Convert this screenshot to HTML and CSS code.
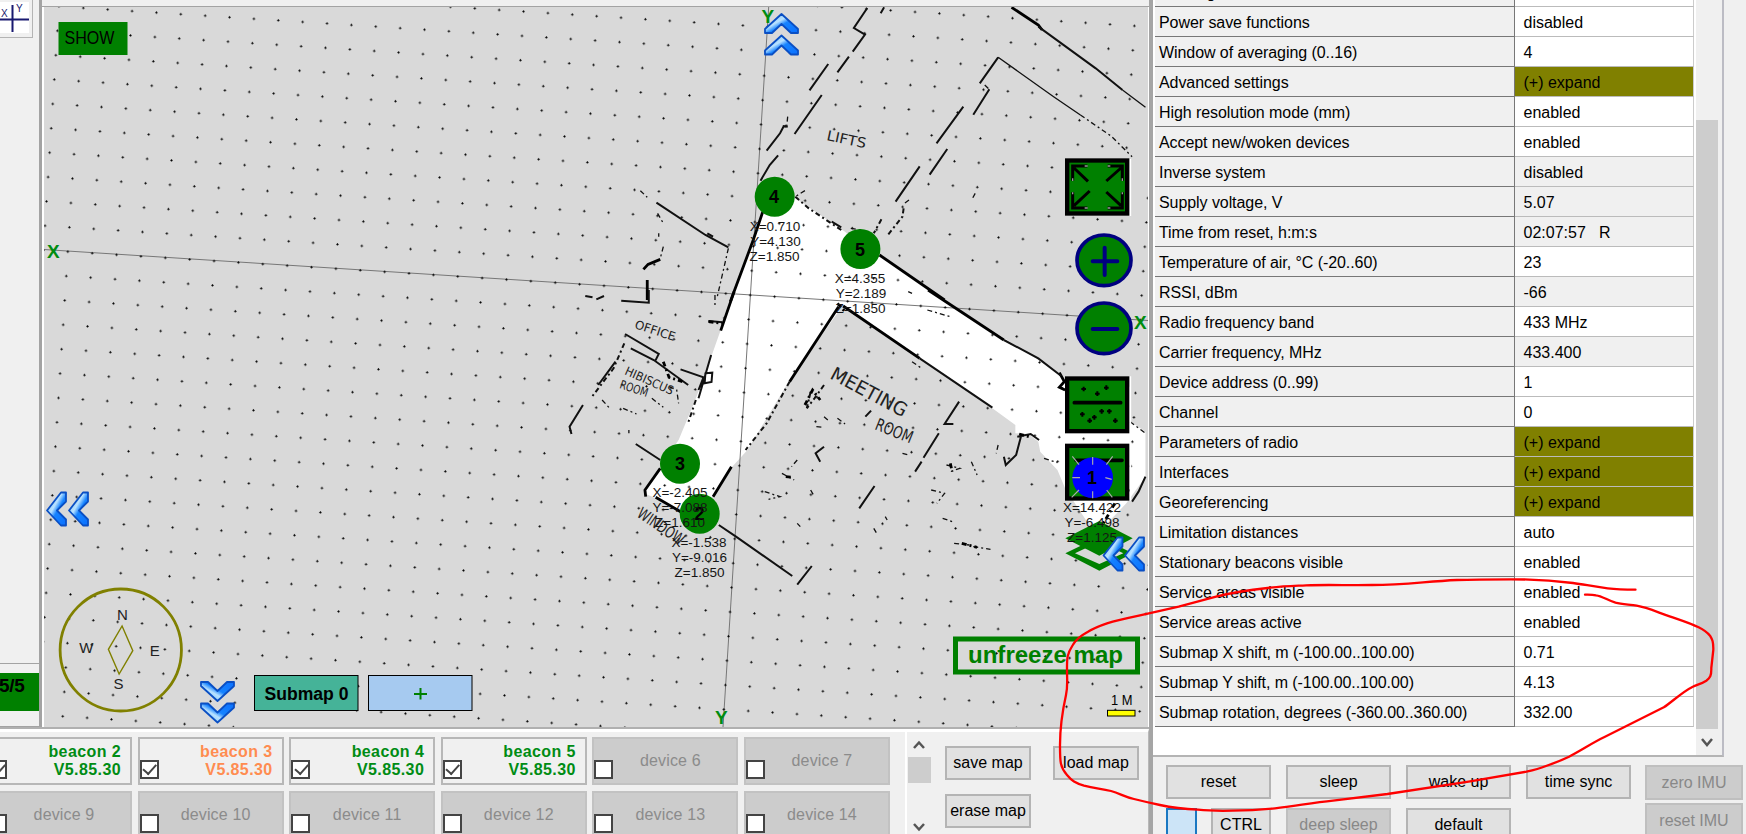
FILE: index.html
```html
<!DOCTYPE html>
<html lang="en">
<head>
<meta charset="utf-8">
<title>Dashboard</title>
<link rel="stylesheet" href="styles.css">
</head>
<body>
<div class="app">
  <div class="workspace">
    <div class="upper">
      <aside class="rail">
        <div class="tool">
          <svg class="tool-icon" viewBox="0 0 29 31"><rect width="29" height="31" fill="#fff"/><path d="M12.5 3V30M0 17.5H29" stroke="#191970" stroke-width="2"/><text x="1" y="15" font-size="10" fill="#191970">X</text><text x="16" y="10" font-size="10" fill="#191970">Y</text></svg>
        </div>
        <div class="counter"><div class="counter-value">5/5</div></div>
      </aside>
      <div class="map">
        <svg class="map-canvas" viewBox="44 7 1104 720" width="1104" height="720">
          <defs>
            <pattern id="grid" width="24.42" height="24.42" patternUnits="userSpaceOnUse" patternTransform="translate(750.2 295.2) rotate(3.64) translate(-12.21 -12.21)">
              <path d="M11.1 12.21h2.2M12.21 11.1v2.2" stroke="#000" stroke-width="1.15"/>
            </pattern>
            <linearGradient id="blue" x1="0" y1="0" x2="1" y2="1"><stop offset="0" stop-color="#5eb4f4"/><stop offset=".4" stop-color="#b9e2ff"/><stop offset=".55" stop-color="#1683ff"/><stop offset="1" stop-color="#0a70ff"/></linearGradient>
            <path id="chevL" d="M15 1H20V10L11 19L20 28V34H15L1 19Z" fill="url(#blue)" stroke="#0a4fc4" stroke-width="1.8" stroke-linejoin="round"/>
            <path id="chevU" d="M17.5 1L34 16V20H27L17.5 11L8 20H1V16Z" fill="url(#blue)" stroke="#0a4fc4" stroke-width="1.8" stroke-linejoin="round"/>
          </defs>
          <rect x="44" y="7" width="1104" height="720" fill="#d9d9d9"/>
          <!-- service area -->
          <g transform="translate(560 290) scale(.38265 .33333)">
            <path fill="#fff" d="M530 -230L615 -275L745 -175L785 -130L835 -105L1005 30L1305 250L1330 290H1490L1492 395L1530 425V560L1480 640L1430 700H1380L1320 595L1300 540L1255 485L1250 455L1225 432L1190 430V405L1130 355L740 45L600 270L490 480L450 530L400 620L300 660L250 625L220 610L222 600L262 530L310 450L350 340L380 250L420 120L455 10Z"/>
          </g>
          <g class="axis">
            <path d="M44 249.500L1148 320.500M768.700 7L723 727"/>
          </g>
          <rect x="44" y="7" width="1104" height="720" fill="url(#grid)"/>
          <!-- upper walls -->
          <g class="wall" transform="scale(.38265 .33333) translate(1463.5 0)">
            <path d="M803 24L768 84L797 104L765 155M847 22L838 40M755 170L725 217M701 192L652 271M684 285L613 402M585 378L575 400L540 452M595 380L582 378M570 466L548 495L524 542M1122 268L1080 344M1145 172L1097 250M1054 320L984 430M1012 447L966 524M940 499L877 605"/>
            <path class="w2" d="M530 635L505 720L445 905M835 765L1005 900M1180 22L1250 75L1260 90"/>
            <path d="M1250 80L1400 205L1470 270"/>
            <path class="thin" d="M1470 270L1530 322M1145 172L1290 290L1360 345"/>
            <path class="dash" d="M898 625L895 650L858 703M840 658L820 700M615 590L650 625L735 690"/>
            <path class="thin dash" d="M1360 345L1440 408L1495 470M440 745L425 820L410 895M210 572L228 592M1085 580L1078 595M760 685L785 690M640 572L615 590M255 640L270 670M258 700V710M270 740L262 775M595 350L592 385M1110 255L1122 268M912 600L900 610"/>
            <path d="M252 608L380 705L440 742M385 700L400 710M710 665L735 682"/>
            <path class="w2" d="M262 778L230 793L218 808M228 840V900"/>
          </g>
          <!-- lower walls -->
          <g class="wall" transform="translate(560 290) scale(.38265 .33333)">
            <path class="w2" d="M455 5L420 122M728 50L600 275M1305 248L1318 275L1305 292L1320 300M262 535L222 600L224 620M448 530L400 620M962 0L1160 150M740 48L940 205M250 622L315 665"/>
            <path d="M940 205L1130 353M1160 150L1250 205L1310 258M395 195L362 325M388 93L425 97M198 462L262 510M415 705L460 740L607 858M658 828L620 884M232 0V38L160 32M66 18L85 22M95 28L115 18M315 238L375 262L362 300M380 250L398 248L396 276L378 280ZM185 175L245 210L335 285M170 132L258 192L248 215M1043 335L1005 402H1028M990 430L950 503M945 515L928 545M822 588L782 655M1195 440L1230 432L1252 450M1205 438L1192 495L1165 525L1160 500M1530 560L1512 605L1495 635M60 345L25 410L30 432M145 215L100 285M690 470L668 490L680 515M813 362L798 380"/>
            <path class="dash" d="M600 275L540 400L485 480M355 330L335 398M168 160L140 235L85 318M655 305L645 355M690 285L665 325L645 355"/>
            <path class="thin dash" d="M110 330L130 355M165 355L200 372M240 325L270 352M285 290L305 300L310 340M670 410L690 412M690 380L705 395M725 385L745 402M620 510L605 530M580 550L612 570M535 605L575 620L545 628M655 600L665 620M970 600L1005 610L985 640M1010 525L1045 535L1020 545M1075 515L1090 555M1145 465L1140 490M1030 760L1070 765M1080 770L1125 778M850 680L855 690M820 715L830 735M920 215L945 235M960 60L1020 80M920 10L910 5M1490 395L1530 430M1265 505L1300 518M895 490L910 495M1000 685L1025 695M620 700L628 710M405 15V50M180 420V430"/>
            <path class="w2 dash" d="M725 40L745 65M640 345L660 300L680 330M1050 760L1090 772M1020 520L1025 545M590 560L610 562M1200 432L1225 440M1450 640L1410 720M270 215L285 262L320 275M388 95L425 100"/>
          </g>
          <g class="scrawl">
            <text transform="translate(826 140) rotate(12)" font-size="14" textLength="40" lengthAdjust="spacingAndGlyphs">LIFTS</text>
            <text transform="translate(634 328) rotate(18)" font-size="12" textLength="42" lengthAdjust="spacingAndGlyphs">OFFICE</text>
            <text transform="translate(624 374) rotate(24)" font-size="12" textLength="52" lengthAdjust="spacingAndGlyphs">HIBISCUS</text>
            <text transform="translate(619 388) rotate(18)" font-size="12" textLength="29" lengthAdjust="spacingAndGlyphs">ROOM</text>
            <text transform="translate(829 378) rotate(28)" font-size="19" textLength="84" lengthAdjust="spacingAndGlyphs">MEETING</text>
            <text transform="translate(874 429) rotate(22)" font-size="17" textLength="39" lengthAdjust="spacingAndGlyphs">ROOM</text>
            <text transform="translate(636 516) rotate(34)" font-size="16" textLength="53" lengthAdjust="spacingAndGlyphs">WINDOW</text>
          </g>
          <g class="axis-name">
            <text x="47" y="258">X</text><text x="1134" y="328.500">X</text><text x="761.500" y="23">Y</text><text x="715" y="724">Y</text>
          </g>
          <rect x="58.500" y="22" width="69" height="33" fill="#008000"/>
          <text x="64.500" y="44" font-size="18.500" textLength="50" lengthAdjust="spacingAndGlyphs">SHOW</text>
          <!-- compass -->
          <g transform="translate(0 440) scale(.36991 .33333)" fill="none" stroke="#808000">
            <ellipse class="fixed" cx="326.500" cy="630" rx="164" ry="183" stroke-width="2.800"/>
            <path class="fixed" d="M330 558L359 632L322 702L293 628Z" stroke-width="1.400"/>
          </g>
          <g class="compass-text">
            <text x="122.300" y="619.500">N</text><text x="86.300" y="652.500">W</text><text x="154.700" y="655.500">E</text><text x="118.600" y="688.500">S</text>
          </g>
          <!-- map tools -->
          <g transform="translate(1040 140) scale(.33333)">
            <path d="M271 57V228M271 709V880M271 911V1082" stroke="#fff" stroke-width="5"/>
            <g fill="#008000" stroke="#000" stroke-width="13">
              <rect x="81.500" y="61.500" width="180" height="159"/>
              <rect x="81.500" y="715.500" width="180" height="158"/>
              <rect x="81.500" y="917.500" width="180" height="158"/>
            </g>
            <path d="M142 78H98V122M203 78H247V122M98 157V204H142M247 157V204H203M102 84L144 124M243 84L199 123M102 197L149 153M243 197L199 156" fill="none" stroke="#000" stroke-width="9"/>
            <path d="M134 78H143M98 115V123M203 78H211M247 115V123M98 157V163M134 204H143M247 157V163M203 204H211" stroke="#9a9a9a" stroke-width="4"/>
            <ellipse cx="192" cy="361" rx="81" ry="76" fill="#008000" stroke="#000080" stroke-width="11"/>
            <path d="M158 364H232M194 323V405" stroke="#000080" stroke-width="12" stroke-linecap="round"/>
            <ellipse cx="192" cy="565" rx="81" ry="76" fill="#008000" stroke="#000080" stroke-width="11"/>
            <path d="M158 567H232" stroke="#000080" stroke-width="12" stroke-linecap="round"/>
            <path d="M103 788H242M108 961H246" stroke="#000" stroke-width="11" stroke-linecap="round"/>
            <path d="M124 747h14M131 740v14M192 743h14M199 736v14M165 761h14M172 754v14M120 823h14M127 816v14M142 842h14M149 835v14M156 832h14M163 825v14M178 814h14M185 807v14M201 814h14M208 807v14M219 842h14M226 835v14" stroke="#000" stroke-width="6"/>
            <path d="M78 1240L178 1190L276 1240L178 1288Z" fill="#d9d9d9"/>
            <path fill="#008000" fill-rule="evenodd" d="M76 1240L178 1190L278 1240L178 1292ZM105 1240L178 1272L250 1240L178 1205Z"/>
            <path fill="#008000" d="M76 1195L178 1143L278 1195L178 1247Z"/>
            <circle cx="158" cy="1013" r="61" fill="#0000ff"/>
            <path d="M97 949L117 974M158 951V974M218 949L199 974M97 1013H120M196 1013L215 1018M95 1072L117 1050M158 1054V1075M200 1050L217 1072" stroke="#aaa" stroke-width="3.500"/>
          </g>
          <!-- beacons -->
          <g fill="#008000"><circle cx="774.700" cy="196.700" r="20"/><circle cx="860.400" cy="249" r="20"/><circle cx="680" cy="463.700" r="20"/><circle cx="699.700" cy="513.700" r="20"/></g>
          <g class="beacon-id"><text x="774" y="203">4</text><text x="860" y="255.500">5</text><text x="680" y="470">3</text><text x="699.500" y="519.500">2</text><text x="1092" y="484">1</text></g>
          <g class="coords">
            <text x="775" y="230.500">X=0.710</text><text x="775.500" y="245.500">Y=4.130</text><text x="774.500" y="260.500">Z=1.850</text>
            <text x="860" y="283">X=4.355</text><text x="861" y="298">Y=2.189</text><text x="860.500" y="313">Z=1.850</text>
            <text x="680" y="497">X=-2.405</text><text x="680" y="512">Y=-7.088</text><text x="680" y="527">Z=1.610</text>
            <text x="699" y="547">X=-1.538</text><text x="699.500" y="562">Y=-9.016</text><text x="699.500" y="577">Z=1.850</text>
            <text x="1092" y="511.500">X=14.422</text><text x="1092" y="526.500">Y=-6.498</text><text x="1092" y="541.500">Z=1.125</text>
          </g>
          <!-- pan arrows -->
          <use href="#chevL" x="46" y="491.500"/><use href="#chevL" x="68" y="491.500"/>
          <use href="#chevU" x="764" y="13"/><use href="#chevU" x="764" y="34.500"/>
          <use href="#chevU" transform="translate(200 702) scale(1 -1)"/><use href="#chevU" transform="translate(200 723.500) scale(1 -1)"/>
          <use href="#chevL" x="1102.500" y="536.500"/><use href="#chevL" x="1124" y="536.500"/>
          <!-- submaps -->
          <g stroke="#000"><rect x="254.500" y="675.500" width="103.500" height="35" fill="#45b398"/><rect x="368.500" y="675.500" width="103.500" height="35" fill="#a6caf0"/></g>
          <text class="bold" x="264.500" y="700" font-size="18" textLength="84" lengthAdjust="spacingAndGlyphs">Submap 0</text>
          <path d="M414 694H427M420.500 688V699.500" stroke="#008000" stroke-width="2"/>
          <rect x="955.500" y="639" width="182" height="33" fill="none" stroke="#008000" stroke-width="5"/>
          <text class="bold" x="968" y="662.500" font-size="23" fill="#008000" textLength="155" lengthAdjust="spacingAndGlyphs">unfreeze map</text>
          <text x="1111" y="704.500" font-size="14" textLength="21.500" lengthAdjust="spacingAndGlyphs">1 M</text>
          <rect x="1107.500" y="710.300" width="27.500" height="5.700" fill="#ff0" stroke="#000"/>
        </svg>
      </div>
    </div>
    <div class="lower">
      <div class="devices">
        <div class="card on"><i class="box checked"></i><b>beacon 2<br>V5.85.30</b></div>
        <div class="card on warn"><i class="box checked"></i><b>beacon 3<br>V5.85.30</b></div>
        <div class="card on"><i class="box checked"></i><b>beacon 4<br>V5.85.30</b></div>
        <div class="card on"><i class="box checked"></i><b>beacon 5<br>V5.85.30</b></div>
        <div class="card"><i class="box"></i><span>device 6</span></div>
        <div class="card"><i class="box"></i><span>device 7</span></div>
        <div class="card"><i class="box"></i><span>device 9</span></div>
        <div class="card"><i class="box"></i><span>device 10</span></div>
        <div class="card"><i class="box"></i><span>device 11</span></div>
        <div class="card"><i class="box"></i><span>device 12</span></div>
        <div class="card"><i class="box"></i><span>device 13</span></div>
        <div class="card"><i class="box"></i><span>device 14</span></div>
      </div>
      <div class="mini-scroll">
        <svg width="22" height="29"><path d="M6 20L11 14.500L16 20" class="arrow"/></svg>
        <div class="thumb"></div>
        <svg width="22" height="54"><path d="M6 45L11 50.500L16 45" class="arrow"/></svg>
      </div>
      <div class="map-actions">
        <button class="btn">save map</button><button class="btn">load map</button><button class="btn">erase map</button>
      </div>
    </div>
  </div>
  <div class="splitter"></div>
  <div class="inspector">
    <div class="list">
      <div class="props">
        <div class="row"><span>Filtering</span><em></em></div>
        <div class="row"><span>Power save functions</span><em>disabled</em></div>
        <div class="row"><span>Window of averaging (0..16)</span><em>4</em></div>
        <div class="row"><span>Advanced settings</span><em class="more">(+) expand</em></div>
        <div class="row"><span>High resolution mode (mm)</span><em>enabled</em></div>
        <div class="row"><span>Accept new/woken devices</span><em>enabled</em></div>
        <div class="row"><span>Inverse system</span><em class="ro">disabled</em></div>
        <div class="row"><span>Supply voltage, V</span><em class="ro">5.07</em></div>
        <div class="row"><span>Time from reset, h:m:s</span><em class="ro">02:07:57&nbsp;&nbsp; R</em></div>
        <div class="row"><span>Temperature of air, °C (-20..60)</span><em>23</em></div>
        <div class="row"><span>RSSI, dBm</span><em class="ro">-66</em></div>
        <div class="row"><span>Radio frequency band</span><em>433 MHz</em></div>
        <div class="row"><span>Carrier frequency, MHz</span><em class="ro">433.400</em></div>
        <div class="row"><span>Device address (0..99)</span><em>1</em></div>
        <div class="row"><span>Channel</span><em>0</em></div>
        <div class="row"><span>Parameters of radio</span><em class="more">(+) expand</em></div>
        <div class="row"><span>Interfaces</span><em class="more">(+) expand</em></div>
        <div class="row"><span>Georeferencing</span><em class="more">(+) expand</em></div>
        <div class="row"><span>Limitation distances</span><em>auto</em></div>
        <div class="row"><span>Stationary beacons visible</span><em>enabled</em></div>
        <div class="row"><span>Service areas visible</span><em>enabled</em></div>
        <div class="row"><span>Service areas active</span><em>enabled</em></div>
        <div class="row"><span>Submap X shift, m (-100.00..100.00)</span><em>0.71</em></div>
        <div class="row"><span>Submap Y shift, m (-100.00..100.00)</span><em>4.13</em></div>
        <div class="row"><span>Submap rotation, degrees (-360.00..360.00)</span><em>332.00</em></div>
      </div>
      <div class="scroll"><div class="scroll-thumb"></div><svg width="22" height="27"><path d="M6 14L11 20L16 14" class="arrow"/></svg></div>
    </div>
    <div class="commands">
      <div class="main-cmds">
        <button class="btn">reset</button><button class="btn">sleep</button><button class="btn">wake up</button><button class="btn">time sync</button>
        <div class="split"><button class="btn focus"></button><button class="btn ctrl">CTRL</button></div><button class="btn off">deep sleep</button><button class="btn">default</button>
      </div>
      <div class="imu"><button class="btn off">zero IMU</button><button class="btn off">reset IMU</button></div>
    </div>
  </div>
</div>
<svg class="markup" viewBox="0 0 1746 834"><path d="M1635.500 589.700C1625 589.700 1617 589.500 1607.700 588.300C1592 586.500 1585 584.500 1573 583C1545 579.500 1530 579.300 1511 579.300C1485 579.300 1475 579.300 1457 580C1425 581.500 1405 585 1372 585C1350 585.500 1330 584.500 1306 585.300C1290 586 1283 586 1267.600 588C1250 590 1235 592 1217 596.300L1178.700 606.700L1140 615.300C1125 618.500 1116 620.500 1107 623.300C1099 626 1094 628 1088 631.700C1080 636 1076 639 1072.800 645C1067 654 1067 658 1067 668C1067 682 1068 686 1066 695C1062 713 1060 730 1060 745C1060 762 1060 767 1067 775C1072 781 1075 783 1084 785.700C1095 788.500 1100 788.500 1111 791C1120 793.500 1125 797 1134 799C1142 801 1148 802.500 1160 805C1172 807.500 1185 809 1198 809.700C1210 811 1220 811 1232.800 810.700C1248 810.500 1258 810 1275 808.300C1295 806 1312 803 1333 800.700L1387.400 794L1468.600 781.700L1526.500 771.700C1537 769.500 1540 768.500 1546 766C1556 762.500 1562 760 1569 756.700C1582 750 1592 743 1604 737.300L1663.800 707.300C1672 702 1682 692 1692.800 686.700C1698 684.500 1702 683.500 1706.300 680.700C1710 678 1711.500 676 1711.300 668L1713.300 650C1713.500 641 1712 639 1710 635.700C1706 631 1704 630 1698.600 627.300C1690 623 1680 620 1669.600 616.300C1657 612 1647 607.500 1636.700 605.700C1630 604.500 1622 604.500 1615.500 602.700C1607 600 1602 596 1596 595.300C1592 594.500 1588 594.700 1585 594.700"/></svg>
</body>
</html>
```
FILE: styles.css
```css
* { box-sizing: border-box; }
body {
  margin: 0;
  width: 1746px;
  height: 834px;
  overflow: hidden;
  position: relative;
  background: #f0f0f0;
  color: #000;
  font: 16px "Liberation Sans", Arial, sans-serif;
}
.app { display: flex; height: 834px; }
.workspace { width: 1149px; display: flex; flex-direction: column; }
.upper { display: flex; height: 729px; border-bottom: 2px solid #b0b0b0; }

.rail { width: 42px; border-right: 3px solid #a3a3a3; display: flex; flex-direction: column; justify-content: space-between; }
.tool { width: 33px; height: 38px; padding-top: 2px; border-right: 1px solid #b4b4b4; border-bottom: 1px solid #b4b4b4; }
.tool-icon { display: block; width: 29px; height: 31px; }
.counter { height: 64px; border-top: 1px solid #a3a3a3; border-bottom: 1px solid #a3a3a3; padding-top: 9px; }
.counter-value { height: 38px; background: #008000; font-weight: bold; font-size: 19px; line-height: 25px; letter-spacing: -.3px; padding-top: 0; text-indent: -1px; }

.map { flex: 1; padding-left: 2px; margin-top: 6px; border-top: 1px solid #a3a3a3; overflow: hidden; background: #fff; }
.map-canvas { display: block; }
.map-canvas .bold { font-weight: bold; }
.axis path { stroke: #777; stroke-width: 1; fill: none; }
.axis-name { font-weight: bold; font-size: 19px; fill: #008c10; }
.wall path { fill: none; stroke: #111; stroke-width: 2; vector-effect: non-scaling-stroke; }
.wall .w2 { stroke-width: 2.8; stroke: #000; }
.wall .thin { stroke-width: 1.3; }
.wall .dash { stroke-dasharray: 5 3 2 3; }
.fixed { vector-effect: non-scaling-stroke; }
.scrawl { font-family: "DejaVu Sans", sans-serif; fill: #222; }
.compass-text { font-size: 15px; text-anchor: middle; fill: #222; }
.beacon-id { font-size: 18px; font-weight: bold; text-anchor: middle; }
.coords { font-size: 13.5px; text-anchor: middle; fill: #151515; }

.lower { flex: 1; display: flex; overflow: hidden; border-right: 1px solid #b8b8b8; border-top: 3px solid #fff; }
.devices { margin-left: -14px; padding-top: 5px; display: grid; grid-template-columns: repeat(6, 146px); grid-auto-rows: 48px; column-gap: 5.6px; row-gap: 6px; border-right: 2px solid #fff; width: 921px; flex: none; }
.card { display: flex; align-items: flex-end; border: 2px solid #c2c2c2; background: #cccccc; color: #8b8b8b; }
.card span { flex: 1; text-align: center; padding-right: 9px; line-height: 18px; margin-bottom: 13px; font-size: 16px; letter-spacing: .15px; }
.card.on { background: #f0f0f0; border-color: #b7b7b7; color: #008c14; }
.card b { flex: 1; text-align: right; padding-right: 9px; line-height: 18px; margin-bottom: 4px; letter-spacing: .4px; }
.card.warn { color: #ff8c50; }
.box { width: 19px; height: 19px; flex: none; border: 2px solid #444; background: #fff; margin-bottom: 4px; }
.checked { display: flex; justify-content: center; }
.checked::after { content: ""; width: 6px; height: 11px; border: solid #444; border-width: 0 2px 2px 0; transform: rotate(42deg) translate(0, -1px); }
.mini-scroll { width: 24px; padding-left: 1px; display: flex; flex-direction: column; }
.mini-scroll svg, .scroll svg { display: block; flex: none; margin-top: -4px; }
.thumb { height: 26px; background: #cdcdcd; flex: none; }
.arrow { fill: none; stroke: #555; stroke-width: 2.5; }
.map-actions { padding: 14px 0 0 14px; display: grid; grid-template-columns: 86px 86px; grid-auto-rows: 34px; column-gap: 22px; row-gap: 14px; }
.btn { border: 2px solid #b4b4b4; border-radius: 0; background: #e1e1e1; padding: 0; font: 16px "Liberation Sans", Arial, sans-serif; color: #000; white-space: nowrap; }
.btn.off { background: #cccccc; color: #888; border-color: #bfbfbf; }

.splitter { width: 4px; background: #a5a5a5; }
.inspector { flex: 1; display: flex; flex-direction: column; }
.list { width: 571px; height: 757px; display: flex; background: #fff; border-right: 2px solid #bcbcc4; border-bottom: 2px solid #b4b4b4; padding-left: 2px; overflow: hidden; }
.props { width: 540px; margin-top: -23.5px; }
.row { display: flex; height: 30.04px; line-height: 31px; white-space: nowrap; }
.row span { width: 359.5px; background: #f0f0f0; border-right: 1px solid #777; border-bottom: 1.5px solid #777; padding-left: 4px; letter-spacing: -.07px; }
.row em { flex: 1; font-style: normal; padding-left: 9px; border-bottom: 1px solid #bbb; border-right: 1px solid #ccc; }
.row .ro { background: #f0f0f0; }
.row .more { background: #808000; }
.scroll { margin-left: 2px; width: 26px; background: #f0f0f0; padding-top: 120px; }
.scroll-thumb { width: 22px; height: 609px; background: #cdcdcd; }
.commands { flex: 1; display: flex; padding: 8px 0 0 13px; gap: 14px; overflow: hidden; }
.main-cmds { display: grid; grid-template-columns: repeat(4, 105px); grid-auto-rows: 34px; column-gap: 15px; row-gap: 9px; }
.split { display: flex; justify-content: space-between; }
.split .focus { width: 31px; background: #cce4f7; border-color: #1a78c2; }
.split .ctrl { width: 60px; }
.imu { display: flex; flex-direction: column; gap: 3px; }
.imu .btn { width: 98px; height: 35px; flex: none; }
.markup { position: absolute; left: 0; top: 0; width: 1746px; height: 834px; pointer-events: none; }
.markup path { fill: none; stroke: #f00; stroke-width: 2.3; stroke-linecap: round; stroke-linejoin: round; }
```
